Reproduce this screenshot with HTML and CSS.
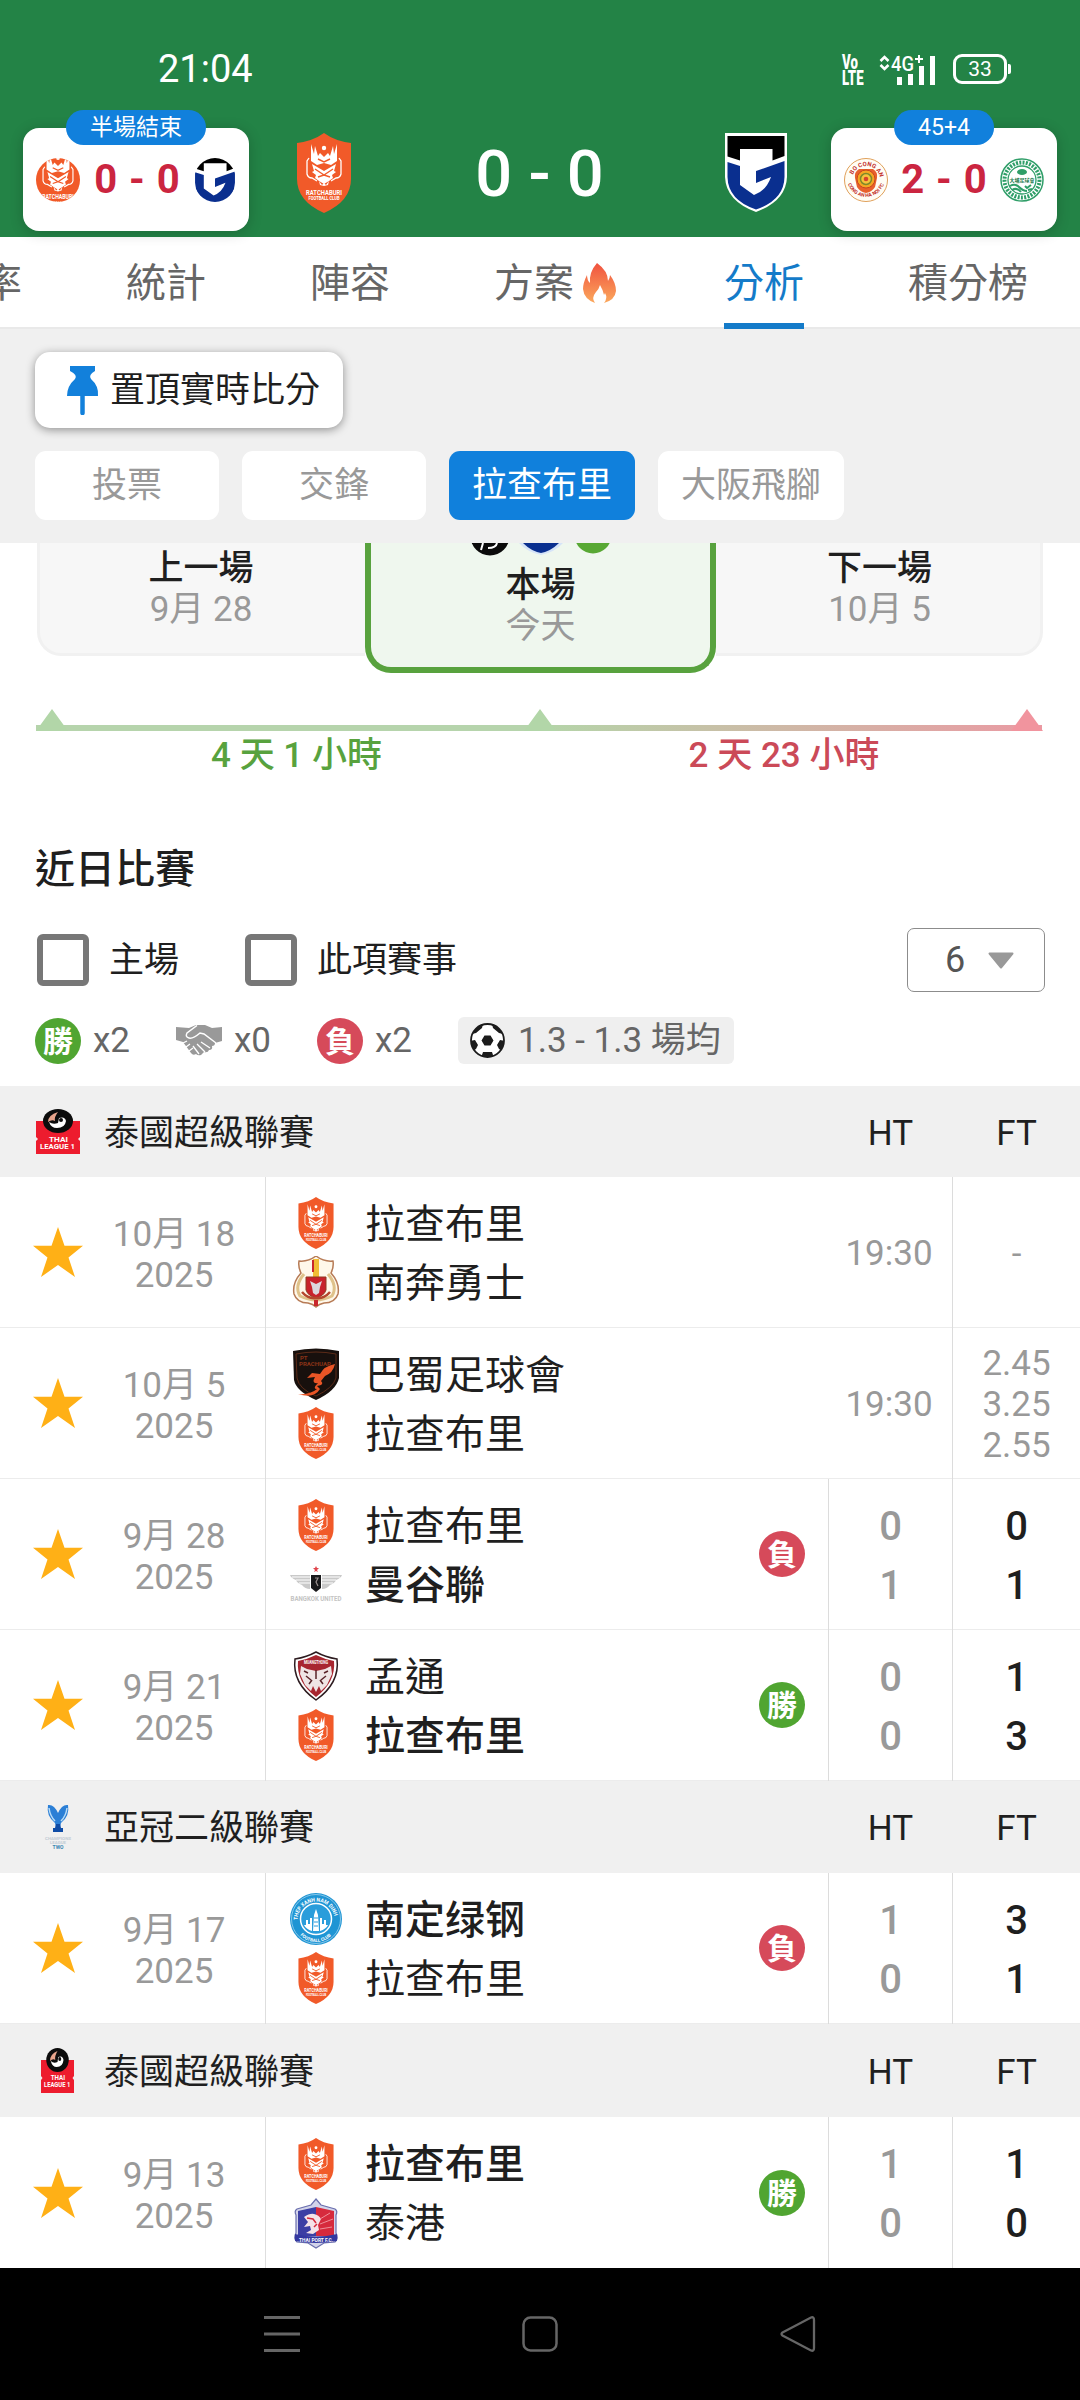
FILE: index.html
```html
<!DOCTYPE html>
<html lang="zh-Hant">
<head>
    <meta charset="UTF-8">
    <meta name="viewport" content="width=device-width, initial-scale=1.0">
    <title>拉查布里 - 分析</title>
    <link rel="stylesheet" href="styles.css">
</head>
<body>
    <!-- Shared icons -->
    <svg class="sprite" width="0" height="0">
        <symbol id="rat" viewBox="0 0 54 80">
            <path d="M27 0Q38 8 54 10V46Q54 68 27 80Q0 68 0 46V10Q16 8 27 0Z" fill="#f15a29"/>
            <g fill="#fff">
                <path d="M14 11l3 10 1-8 3 10 2-3 4 4 4-4 2 3 3-10 1 8 3-10v17l-6 4-7-2-7 2-6-4z"/>
                <circle cx="27" cy="15" r="2.2"/>
                <path d="M15 31l12 7 12-7-2 7 2 1-4 3 1 3-4 3-5 3-5-3-4-3 1-3-4-3 2-1z"/>
                <path d="M22 48l3 4 2-2 2 2 3-4-1 4-4 1-4-1z"/>
            </g>
            <path d="M21 26l6 3 6-3M18 36l9 6 9-6M21 44l6-2 6 2" stroke="#f15a29" stroke-width="1.4" fill="none"/>
            <path d="M12 25l-2 3v13q1 4 5 4l5 3M42 25l2 3v13q-1 4-5 4l-5 3" stroke="#fff" stroke-width="1.3" fill="none"/>
            <text x="27" y="61.500" class="crest-text" font-size="7.500" fill="#fff" textLength="36" lengthAdjust="spacingAndGlyphs">RATCHABURI</text>
            <text x="27" y="67" class="crest-text" font-size="5" fill="#fff" textLength="31" lengthAdjust="spacingAndGlyphs">FOOTBALL CLUB</text>
        </symbol>
        <symbol id="gamba" viewBox="0 0 62 79">
            <path d="M0 0H62V44Q61 68 31 79Q1 68 0 44Z" fill="#fff"/>
            <path d="M2.500 3H59.500V23L47.500 27.500V16H15V27.500L2.500 23.500Z" fill="#000"/>
            <path d="M2.500 29L15 33V52L29 62Q41 58 46 44L31 50V38L59.500 28V44Q59 67 31 76.500Q3 67 2.500 44Z" fill="#0a2f8f"/>
        </symbol>
        <symbol id="star" viewBox="0 0 50 50">
            <path d="M25 0L31.500 18.700H50L35.500 30.500L42 50L25 38L8 50L14.500 30.500L0 18.700H18.500Z" fill="#ffb016"/>
        </symbol>
        <symbol id="thai" viewBox="0 0 44 46" preserveAspectRatio="none">
            <path d="M0 12H44V28l-2 2 2 2V45H0V32l2-2-2-2Z" fill="#ed1c2e"/>
            <ellipse cx="22" cy="12" rx="15" ry="12" fill="#0c0c0c"/>
            <path d="M13 13q4 3 9 1l1-5q6-2 7 3-1 7-9 7-6 0-8-6z" fill="#fff"/>
            <path d="M12 13q0-7 10-10-4 5-3 9-3-2-7 1z" fill="#e8a48c"/>
            <circle cx="25" cy="11" r="2" fill="#0c0c0c"/>
            <text x="22.500" y="32.500" class="crest-text" font-size="6.500" fill="#fff" textLength="19" lengthAdjust="spacingAndGlyphs">THAI</text>
            <text x="21.500" y="39.500" class="crest-text" font-size="6.500" fill="#fff" textLength="35" lengthAdjust="spacingAndGlyphs">LEAGUE 1</text>
        </symbol>
    </svg>

    <header class="top">
        <div class="status-bar">
            <span class="clock">21:04</span>
            <div class="status-icons">
                <span class="volte">Vo<br>LTE</span>
                <svg class="signal" width="58" height="32" viewBox="0 0 58 32">
                    <path d="M1.500 7l4-4 4 4M1.500 11l4 4 4-4" fill="none" stroke="#fff" stroke-width="2.600"/>
                    <text x="12" y="17" font-size="21" font-weight="500" fill="#fff" textLength="23" lengthAdjust="spacingAndGlyphs">4G</text>
                    <path d="M36 5h8M40 1v8" stroke="#fff" stroke-width="2"/>
                    <path d="M20.500 23v8M31.500 20v11M42.500 12v19M53.500 2v29" stroke="#fff" stroke-width="5"/>
                </svg>
                <span class="battery">33</span>
            </div>
        </div>
        <div class="scoreboard">
            <div class="mini-card">
                <span class="mini-label">半場結束</span>
                <svg class="round" width="44" height="44" viewBox="4 15 46 50"><use href="#rat" width="54" height="80"/></svg>
                <b>0 - 0</b>
                <svg class="round" width="42" height="44" viewBox="1 9 60 62"><use href="#gamba" width="62" height="79"/></svg>
            </div>
            <svg class="crest-home" width="54" height="80"><use href="#rat"/></svg>
            <div class="main-score">0 - 0</div>
            <svg class="crest-away" width="62" height="79"><use href="#gamba"/></svg>
            <div class="mini-card">
                <span class="mini-label">45+4</span>
                <svg width="44" height="44" viewBox="0 0 44 44">
                    <defs>
                        <path id="arcTop" d="M8 22a14 14 0 0 1 28 0"/>
                        <path id="arcBottom" d="M3 20a19 19 0 0 0 38 0"/>
                    </defs>
                    <circle cx="22" cy="22" r="21.500" fill="#fffdf5" stroke="#e0a05a" stroke-width="1"/>
                    <path d="M15 11h14q5 3 4 9l-2 9q-3 5-9 6-6-1-9-6l-2-9q-1-6 4-9z" fill="#e8602c"/>
                    <circle cx="22" cy="21" r="9" fill="#f5a623" stroke="#c9451e" stroke-width="1"/>
                    <circle cx="22" cy="21" r="5.500" fill="#f6c23c" stroke="#7d8a2a" stroke-width="1.500"/>
                    <circle cx="22" cy="21" r="2.300" fill="#d8432a"/>
                    <text font-size="6" font-weight="700" fill="#c22d27"><textPath href="#arcTop" startOffset="12%">BO CONG AN</textPath></text>
                    <text font-size="5" font-weight="700" fill="#c22d27"><textPath href="#arcBottom" startOffset="10%">CONG AN HA NOI FC</textPath></text>
                </svg>
                <b>2 - 0</b>
                <svg width="44" height="44" viewBox="0 0 44 44">
                    <circle cx="22" cy="22" r="21" fill="#fff" stroke="#2f9e68" stroke-width="1.500"/>
                    <circle cx="22" cy="22" r="17.500" fill="none" stroke="#2f9e68" stroke-width="4" stroke-dasharray="2 1.300"/>
                    <circle cx="22" cy="22" r="14" fill="#fff" stroke="#2f9e68" stroke-width="1.300"/>
                    <ellipse cx="22" cy="14" rx="5" ry="3" fill="#2f9e68"/>
                    <text x="22" y="24" text-anchor="middle" font-size="5" font-weight="700" fill="#19784a">大埔足球會</text>
                    <path d="M10 28q5-3 9 1t8 4M12 32q5-3 9 2M25 28l2 2 4-3M28 32l4-1" stroke="#2f9e68" stroke-width="2" fill="none"/>
                </svg>
            </div>
        </div>
    </header>

    <nav class="tabs">
        <span>率</span>
        <span>統計</span>
        <span>陣容</span>
        <span class="with-icon">方案
            <svg width="33" height="40" viewBox="0 0 33 40">
                <defs><linearGradient id="fire" x1="0" y1="0" x2="0" y2="1"><stop offset="0" stop-color="#f0523f"/><stop offset="1" stop-color="#fba85c"/></linearGradient></defs>
                <path d="M14 0Q25 8 25 18q2-3 2-6 6 8 6 16Q32 37 21 40q4-5 1-10l-1 2Q20 27 17 22q-1 4-4 7-5 6-1 11Q1 36 0 26 0 20 4 12q0 5 3 8Q6 9 14 0Z" fill="url(#fire)"/>
            </svg>
        </span>
        <span class="active">分析</span>
        <span>積分榜</span>
    </nav>

    <section class="filters">
        <button class="pin-btn">
            <svg width="32" height="49" viewBox="0 0 32 49">
                <path d="M3 0H28V5Q21 9 24 13Q32 20 31 30H0Q0 20 8 13Q11 9 3 5Z" fill="#1280db"/>
                <path d="M15.500 29V47" stroke="#1280db" stroke-width="4.500" stroke-linecap="round"/>
            </svg>
            置頂實時比分
        </button>
        <div class="chips">
            <span class="chip">投票</span>
            <span class="chip">交鋒</span>
            <span class="chip selected">拉查布里</span>
            <span class="chip">大阪飛腳</span>
        </div>
    </section>

    <main>
        <section class="schedule">
            <div class="slot prev"><strong>上一場</strong><span>9月 28</span></div>
            <div class="slot current">
                <svg class="slot-icons" width="142" height="14" viewBox="0 0 142 14">
                    <circle cx="20" cy="-7" r="19.500" fill="#0b0b0b"/>
                    <path d="M13 0l-2 7M18 5q8 0 9-5" stroke="#fff" stroke-width="2" fill="none"/>
                    <path d="M49 0h44q-8 9-22 12-14-3-22-12z" fill="#d6e4f8"/>
                    <path d="M53 0h36q-8 8-18 10-10-2-18-10z" fill="#0a2f8f"/>
                    <circle cx="123" cy="-8" r="18.500" fill="#58a834"/>
                </svg>
                <strong>本場</strong><span>今天</span>
            </div>
            <div class="slot next"><strong>下一場</strong><span>10月 5</span></div>
        </section>

        <section class="timeline">
            <svg width="1007" height="22" viewBox="0 0 1007 22">
                <defs><linearGradient id="rest" x1="0" x2="1"><stop offset="0" stop-color="#b4d5a9"/><stop offset="1" stop-color="#ea9aa3"/></linearGradient></defs>
                <rect x="0" y="16" width="503" height="6" fill="#b6d4ac"/>
                <rect x="503" y="16" width="503" height="6" fill="url(#rest)"/>
                <path d="M16 0L32 22H0ZM504 0L520 22H488Z" fill="#b2d6a8"/>
                <path d="M991 0L1007 22H975Z" fill="#f1949e"/>
            </svg>
            <div class="timeline-labels">
                <span class="green">4 天 1 小時</span>
                <span class="red">2 天 23 小時</span>
            </div>
        </section>

        <section class="recent">
            <h2>近日比賽</h2>
            <div class="options">
                <label><i class="checkbox"></i>主場</label>
                <label><i class="checkbox"></i>此項賽事</label>
                <div class="select">6
                    <svg width="26" height="17" viewBox="0 0 26 17"><path d="M1.500 1.500H24.500L13 15.500Z" fill="#999" stroke="#999" stroke-width="2" stroke-linejoin="round"/></svg>
                </div>
            </div>
            <div class="summary">
                <span class="badge win">勝</span><span class="count">x2</span>
                <svg class="draw" width="46" height="31" viewBox="0 0 46 31">
                    <path d="M0 2L13 3L20 0H29L36 3L46 2V16L39 18Q39 21 36 21Q37 25 33 25Q32 28 28 27L25 30Q22 31 20 29Q17 31 15 28L7 17L0 15Z" fill="#999"/>
                    <path d="M21 .5L11 8Q9 12 13 13Q17 14 24 8L28 9L40 18" stroke="#fff" stroke-width="1.500" fill="none"/>
                    <path d="M25 17l9 6M21 19l8 8M17 21l6 8M7 18l4-2M10 22l4-3M13 26l4-3" stroke="#fff" stroke-width="1.300" fill="none"/>
                </svg><span class="count">x0</span>
                <span class="badge loss">負</span><span class="count">x2</span>
                <span class="average">
                    <svg width="35" height="35" viewBox="0 0 35 35">
                        <defs><clipPath id="ballClip"><circle cx="17.500" cy="17.500" r="16.500"/></clipPath></defs>
                        <circle cx="17.500" cy="17.500" r="16.500" fill="#fff" stroke="#1c1c1c" stroke-width="1.800"/>
                        <path clip-path="url(#ballClip)" d="M14.500 12.500h6l3 5-3 5h-6l-3-5zM0 18l5-1 3 5-2 4-5 3zM35 18l-5-1-3 5 2 4 5 3zM13 29h9l2 6H11zM4 4l9-3-1 4-6 5-4 1zM31 4l-9-3 1 4 6 5 4 1z" fill="#1c1c1c"/>
                    </svg>
                    1.3 - 1.3 場均
                </span>
            </div>
        </section>

        <section class="matches">
            <div class="league">
                <svg width="44" height="46"><use href="#thai"/></svg>
                <span class="league-name">泰國超級聯賽</span><span class="ht">HT</span><span class="ft">FT</span>
            </div>

            <div class="match upcoming">
                <svg class="star" width="50" height="50"><use href="#star"/></svg>
                <div class="date">10月 18<br>2025</div>
                <div class="teams">
                    <div class="team"><svg width="52" height="52"><use href="#rat"/></svg>拉查布里</div>
                    <div class="team">
                        <svg width="52" height="52" viewBox="0 0 52 52">
                            <path d="M9 5Q18 6 26 0Q34 6 43 5Q44 11 41 17Q50 27 48 38Q45 47 34 47Q29 48 26 51Q23 48 18 47Q7 47 4 38Q2 27 11 17Q8 11 9 5Z" fill="#fff8ea" stroke="#b77b56" stroke-width="1.500"/>
                            <path d="M14 18Q4 30 10 40Q18 44 26 44Q34 44 42 40Q48 30 38 18" fill="none" stroke="#dfc28a" stroke-width="3"/>
                            <path d="M23 3h6v19h-6z" fill="#f1bd35"/><path d="M22 4h2v12h-2zM24 44h4v6h-4z" fill="#c9272c"/>
                            <path d="M16 21H36V34Q34 40 26 42Q18 40 16 34Z" fill="#c8222b" stroke="#8f3a22" stroke-width="1"/>
                            <path d="M20 25l6 3 6-3-2 6-1 6-3 2-3-2-1-6z" fill="#dcd7dc"/>
                            <path d="M12 36q6 7 14 6 8 1 14-6" fill="none" stroke="#b4472d" stroke-width="2.500"/>
                        </svg>南奔勇士
                    </div>
                </div>
                <div class="ht">19:30</div>
                <div class="ft odds">-</div>
            </div>

            <div class="match upcoming">
                <svg class="star" width="50" height="50"><use href="#star"/></svg>
                <div class="date">10月 5<br>2025</div>
                <div class="teams">
                    <div class="team">
                        <svg width="52" height="52" viewBox="0 0 52 52">
                            <path d="M3 3Q26-2 49 3V30Q46 43 26 52Q6 43 4 32Z" fill="#18100d"/>
                            <path d="M6 6Q26 2 46 6V30Q43 40 26 48Q9 41 7 30Z" fill="none" stroke="#5c2b18" stroke-width="1"/>
                            <path d="M45 16Q34 18 30 26L22 25L17 30L25 29Q21 36 28 35Q22 41 27 41Q20 47 8 46Q24 51 30 41L27 38Q35 37 31 33L35 28Q43 25 45 16Z" fill="#e95526"/>
                            <text x="10" y="12" font-size="6" font-weight="700" fill="#8a3418">PT</text>
                            <text x="9" y="18" font-size="6" font-weight="700" fill="#8a3418" textLength="32" lengthAdjust="spacingAndGlyphs">PRACHUAP</text>
                        </svg>巴蜀足球會
                    </div>
                    <div class="team"><svg width="52" height="52"><use href="#rat"/></svg>拉查布里</div>
                </div>
                <div class="ht">19:30</div>
                <div class="ft odds">2.45<br>3.25<br>2.55</div>
            </div>

            <div class="match">
                <svg class="star" width="50" height="50"><use href="#star"/></svg>
                <div class="date">9月 28<br>2025</div>
                <div class="teams">
                    <div class="team"><svg width="52" height="52"><use href="#rat"/></svg>拉查布里</div>
                    <div class="team winner">
                        <svg width="52" height="52" viewBox="0 0 52 52">
                            <path d="M26 8l1 2h2l-2 2 1 2-2-1-2 1 1-2-2-2h2z" fill="#e0454c"/>
                            <path d="M0 17H20V31Q15 31 12 27Q7 25 6 22Q1 20 0 17ZM52 17H32V31Q37 31 40 27Q45 25 46 22Q51 20 52 17Z" fill="#c9c9c9"/>
                            <path d="M2 19h18M6 22h14M9 25h11M32 19h18M32 22h14M32 25h11" stroke="#fff" stroke-width="1"/>
                            <path d="M21 17H31V30L26 34L21 30Z" fill="#19191b"/>
                            <path d="M25 20h3l-2 4 2 4" stroke="#99908f" stroke-width="1.200" fill="none"/>
                            <text x="26" y="43" class="crest-text" font-size="7" fill="#c4c4c4" textLength="51" lengthAdjust="spacingAndGlyphs">BANGKOK UNITED</text>
                        </svg>曼谷聯
                    </div>
                </div>
                <span class="badge loss">負</span>
                <div class="ht">0<br>1</div>
                <div class="ft">0<br>1</div>
            </div>

            <div class="match">
                <svg class="star" width="50" height="50"><use href="#star"/></svg>
                <div class="date">9月 21<br>2025</div>
                <div class="teams">
                    <div class="team">
                        <svg width="52" height="52" viewBox="0 0 52 52">
                            <path d="M5 9Q17 7 26 2Q35 7 47 9Q50 33 26 50Q2 33 5 9Z" fill="#fff" stroke="#2d1c20" stroke-width="1.500"/>
                            <path d="M8 11Q18 9 26 5Q34 9 44 11Q46 32 26 47Q6 32 8 11Z" fill="#a82630"/>
                            <path d="M11 16l6 3 9 2 9-2 6-3 1 8-5 11-6 6-2-5-3 6-3-6-2 5-6-6-5-11z" fill="#efe5e5"/>
                            <path d="M16 26l5 4M36 26l-5 4M19 34l3-4M33 34l-3-4M26 20v9M14 21l4 2M38 21l-4 2" stroke="#5a2429" stroke-width="1.500"/>
                            <text x="26" y="14" class="crest-text" font-size="5" fill="#fff" textLength="24" lengthAdjust="spacingAndGlyphs">MUANGTHONG</text>
                        </svg>孟通
                    </div>
                    <div class="team winner"><svg width="52" height="52"><use href="#rat"/></svg>拉查布里</div>
                </div>
                <span class="badge win">勝</span>
                <div class="ht">0<br>0</div>
                <div class="ft">1<br>3</div>
            </div>

            <div class="league">
                <svg width="44" height="46" viewBox="0 0 44 46">
                    <path d="M12 1Q18 0 22 9Q26 0 32 1Q34 12 25 19L24 23H20L19 19Q10 12 12 1Z" fill="#2b7fd6"/>
                    <path d="M13 4q1 8 6 13M31 4q-1 8-6 13" stroke="#b9dcf7" stroke-width="1.500" fill="none"/>
                    <path d="M20 20h4l1 4h2v4H17v-4h2z" fill="#0f4ca6"/>
                    <text x="22" y="36" class="crest-text" font-size="4" fill="#c3ccd5" textLength="26" lengthAdjust="spacingAndGlyphs">CHAMPIONS</text>
                    <text x="22" y="40" class="crest-text" font-size="4" fill="#c3ccd5" textLength="16" lengthAdjust="spacingAndGlyphs">LEAGUE</text>
                    <text x="22" y="45" class="crest-text" font-size="4.500" fill="#3b87b3" textLength="11" lengthAdjust="spacingAndGlyphs">TWO</text>
                </svg>
                <span class="league-name">亞冠二級聯賽</span><span class="ht">HT</span><span class="ft">FT</span>
            </div>

            <div class="match">
                <svg class="star" width="50" height="50"><use href="#star"/></svg>
                <div class="date">9月 17<br>2025</div>
                <div class="teams">
                    <div class="team winner">
                        <svg width="52" height="52" viewBox="0 0 52 52">
                            <defs>
                                <path id="ndTop" d="M7.500 27a18.500 18.500 0 0 1 37 0"/>
                                <path id="ndBottom" d="M5 28a21 21 0 0 0 42 0"/>
                            </defs>
                            <circle cx="26" cy="26" r="26" fill="#1f95d4"/>
                            <circle cx="26" cy="26" r="24.500" fill="none" stroke="#9ed2ee" stroke-width=".8"/>
                            <circle cx="26" cy="26" r="15.500" fill="#2a9ddb" stroke="#fff" stroke-width="1.500"/>
                            <path d="M23 38l1-16 2-6 2 6 1 16zM14 32h2v-5h2v4h2v-6h2v13q-6-2-8-6zM38 32h-2v-5h-2v4h-2v-6h-2v13q6-2 8-6z" fill="#fff"/>
                            <path d="M24 25h4M24 29h4M24 33h4" stroke="#2a9ddb" stroke-width="1"/>
                            <text font-size="5.500" font-weight="700" fill="#fff"><textPath href="#ndTop" textLength="54" lengthAdjust="spacingAndGlyphs">THEP XANH NAM DINH</textPath></text>
                            <text font-size="4.500" font-weight="700" fill="#fff"><textPath href="#ndBottom" startOffset="23%">FOOTBALL CLUB</textPath></text>
                        </svg>南定绿钢
                    </div>
                    <div class="team"><svg width="52" height="52"><use href="#rat"/></svg>拉查布里</div>
                </div>
                <span class="badge loss">負</span>
                <div class="ht">1<br>0</div>
                <div class="ft">3<br>1</div>
            </div>

            <div class="league narrow-logo">
                <svg width="33" height="46"><use href="#thai"/></svg>
                <span class="league-name">泰國超級聯賽</span><span class="ht">HT</span><span class="ft">FT</span>
            </div>

            <div class="match last">
                <svg class="star" width="50" height="50"><use href="#star"/></svg>
                <div class="date">9月 13<br>2025</div>
                <div class="teams">
                    <div class="team winner"><svg width="52" height="52"><use href="#rat"/></svg>拉查布里</div>
                    <div class="team">
                        <svg width="52" height="52" viewBox="0 0 52 52">
                            <path d="M26 2L31 8L45 12Q48 14 46 18V36Q49 41 45 45L34 46L26 51L18 46L7 45Q3 41 6 36V18Q4 14 7 12L21 8Z" fill="#d3d4ea" stroke="#6a6fae" stroke-width="1.200"/>
                            <path d="M8 14L26 10V39H8Z" fill="#3c3fa4"/><path d="M26 10L44 14V39H26Z" fill="#d62a3d"/>
                            <path d="M14 20q6-4 10-3 5 1 7 5l-3 6 1 5-6 4-7-1 5-3-1-4-6 1 4-5z" fill="#f5e3e8"/>
                            <path d="M17 21l6 1 3 4M24 30l3-3" stroke="#d62a3d" stroke-width="1.500" fill="none"/>
                            <path d="M30 22l10-6M30 27l13-5M30 32l12-2" stroke="#ef8f9a" stroke-width="1"/>
                            <path d="M5 37Q26 42 47 37V44Q26 48 5 44Z" fill="#3438a0"/>
                            <text x="26" y="44.500" class="crest-text" font-size="5" fill="#fff" textLength="34" lengthAdjust="spacingAndGlyphs">THAI PORT F.C.</text>
                        </svg>泰港
                    </div>
                </div>
                <span class="badge win">勝</span>
                <div class="ht">1<br>0</div>
                <div class="ft">1<br>0</div>
            </div>
        </section>
    </main>

    <footer class="nav-bar">
        <svg width="36" height="38" viewBox="0 0 36 38"><path d="M0 2.500H36M0 19H36M0 35.500H36" stroke="#666" stroke-width="3"/></svg>
        <svg width="36" height="38" viewBox="0 0 36 38"><rect x="1.500" y="2.500" width="33" height="33" rx="7" fill="none" stroke="#666" stroke-width="2.500"/></svg>
        <svg width="36" height="38" viewBox="0 0 36 38"><path d="M2.500 17.500L31 2.500Q34 1.500 34 5V33Q34 36.500 31 35.500L2.500 20.500Q.5 19 2.500 17.500Z" fill="none" stroke="#666" stroke-width="2.300"/></svg>
    </footer>
</body>
</html>
```
FILE: styles.css
```css
* { box-sizing: border-box; }
body { margin: 0; width: 1080px; height: 2400px; overflow: hidden; background: #fff; color: #1f1f1f; font-family: Roboto, "Noto Sans CJK TC", sans-serif; font-size: 35px; line-height: 41px; }
svg { display: block; flex: none; }
.sprite { display: none; }
.crest-text { font-weight: 700; text-anchor: middle; }

/* header */
.top { height: 237px; background: #238346; color: #fff; }
.status-bar { height: 128px; padding: 49px 73px 0 158px; display: flex; justify-content: space-between; align-items: flex-start; }
.clock { font-size: 38px; }
.status-icons { display: flex; align-items: flex-start; padding-top: 5px; }
.volte { font-size: 20px; line-height: 16px; font-weight: 900; width: 22px; margin-right: 15px; transform: scaleX(.66); transform-origin: left; }
.signal { margin-right: 16px; }
.battery { width: 54px; height: 30px; border: 3px solid #fff; border-radius: 9px; font-size: 21px; line-height: 25px; text-align: center; position: relative; }
.battery::after { content: ""; position: absolute; right: -7px; top: 7px; width: 3px; height: 10px; border-radius: 0 2px 2px 0; background: #fff; }
.scoreboard { display: flex; padding: 0 23px; }
.mini-card { position: relative; width: 226px; height: 103px; padding: 30px 13px 0; background: #fff; border-radius: 16px; box-shadow: 0 2px 14px rgba(0, 0, 0, .2); display: flex; justify-content: space-between; align-items: flex-start; }
.mini-card b { color: #cb2540; font-size: 40px; line-height: 44px; word-spacing: 2px; }
.mini-label { position: absolute; top: -18px; left: 50%; transform: translateX(-50%); height: 35px; padding: 0 24px; border-radius: 18px; background: #1180dc; font-size: 23px; line-height: 35px; white-space: nowrap; }
.round { border-radius: 50%; }
.crest-home { margin: 5px 0 0 48px; }
.main-score { flex: 1; padding-left: 3px; text-align: center; font-size: 65px; font-weight: 500; line-height: 93px; }
.crest-away { margin: 5px 44px 0 0; }

/* tabs */
.tabs { height: 92px; display: flex; gap: 104px; overflow: hidden; box-shadow: inset 0 -2px #e9e9e9; font-size: 40px; line-height: 93px; color: #666; white-space: nowrap; }
.tabs span:first-child { margin-left: -18px; }
.tabs span { height: 92px; }
.tabs .with-icon { display: flex; align-items: center; gap: 9px; width: 126px; }
.tabs .active { color: #147bc9; border-bottom: 6px solid #147bc9; }

/* filters */
.filters { height: 214px; padding: 23px 35px; background: #f0f0f0; }
.pin-btn { width: 308px; height: 76px; padding: 0 0 0 32px; display: flex; align-items: center; gap: 11px; border: 0; border-radius: 15px; background: #fff; color: #1f1f1f; font: inherit; white-space: nowrap; box-shadow: 0 2px 10px rgba(0, 0, 0, .4); }
.chips { display: flex; gap: 23px; margin-top: 23px; }
.chip { min-width: 184px; height: 69px; padding: 0 23px; border-radius: 11px; background: #fff; color: #999; line-height: 70px; text-align: center; }
.chip.selected { background: #1080dc; color: #fff; }

/* previous / current / next */
.schedule { display: flex; height: 130px; padding: 0 37px; align-items: flex-start; }
.slot { display: flex; flex-direction: column; align-items: center; }
.slot strong { font-weight: 500; }
.slot span { color: #999; }
.prev, .next { height: 113px; padding-top: 5px; background: #f7f7f7; border-bottom: 3px solid #f1f1f1; }
.prev { width: 328px; border-left: 3px solid #f1f1f1; border-radius: 0 0 0 24px; padding-right: 3px; }
.next { flex: 1; border-right: 3px solid #f1f1f1; border-radius: 0 0 24px 0; padding-left: 3px; }
.current { width: 351px; height: 130px; border: 6px solid #58a23e; border-top: 0; border-radius: 0 0 26px 26px; background: #eff7ee; }
.slot-icons { height: 14px; margin-bottom: 8px; }
.timeline { margin: 36px 36px 0; }
.timeline-labels { display: flex; font-weight: 500; text-align: center; margin-top: 4px; }
.timeline-labels span { width: 521px; }
.green { color: #58a23e; }
.timeline-labels .red { width: 454px; color: #cb4a58; }

/* recent matches */
.recent { height: 310px; padding: 71px 35px 0; }
.recent h2 { margin: 0; font-size: 40px; line-height: 46px; font-weight: 500; }
.options { display: flex; align-items: center; margin-top: 35px; padding-left: 2px; }
.options label { display: flex; align-items: center; gap: 20px; margin-right: 66px; }
.checkbox { width: 52px; height: 52px; border: 6px solid #777; border-radius: 6px; }
.select { width: 138px; height: 64px; margin-left: auto; padding: 0 30px 0 37px; display: flex; align-items: center; justify-content: space-between; border: 1px solid #8c8c8c; border-radius: 7px; font-size: 36px; color: #555; }
.summary { display: flex; align-items: center; margin-top: 25px; color: #666; }
.badge { width: 46px; height: 46px; flex: none; border-radius: 50%; color: #fff; font-size: 30px; line-height: 47px; font-weight: 700; text-align: center; }
.win { background: #50a531; }
.loss { background: #d64a5a; }
.count { width: 83px; margin-left: 12px; }
.average { height: 47px; padding: 0 13px 0 12px; display: flex; align-items: center; gap: 13px; border-radius: 6px; background: #efefef; white-space: nowrap; }

/* match table */
.league { height: 92px; display: flex; align-items: center; background: #f0f0f0; padding-left: 36px; }
.league:first-child { height: 91px; }
.league span { padding-top: 3px; }
.league-name { margin-left: 24px; flex: 1; }
.narrow-logo { height: 93px; padding-left: 41px; }
.narrow-logo .league-name { margin-left: 30px; }
.league .ht { width: 125px; text-align: center; }
.league .ft { width: 127px; text-align: center; }
.match { height: 151px; display: flex; align-items: center; border-bottom: 1px solid #ececec; }
.star { margin-left: 33px; }
.date { width: 182px; padding-top: 6px; text-align: center; color: #999; }
.teams { flex: 1; height: 151px; padding: 18px 0 0 24px; border-left: 1px solid #dedede; }
.team { display: flex; align-items: center; gap: 23px; height: 59px; font-size: 40px; }
.team svg { margin-top: -2px; }
.winner { font-weight: 500; }
.match .badge { margin-right: 23px; }
.match .ht, .match .ft { height: 151px; padding-top: 18px; border-left: 1px solid #dcdcdc; text-align: center; font-size: 40px; line-height: 59px; font-weight: 500; }
.match .ht { width: 124px; color: #999; }
.match .ft { width: 128px; }
.upcoming .ht, .match .odds { display: flex; align-items: center; justify-content: center; padding: 3px 0 0; font-size: 35px; line-height: 41px; font-weight: 400; color: #999; }
.upcoming .ht { border-left: 0; padding-right: 2px; }
.last { border-bottom: 0; }

.nav-bar { height: 132px; padding: 47px 264px 0; display: flex; justify-content: space-between; background: #000; }
```
